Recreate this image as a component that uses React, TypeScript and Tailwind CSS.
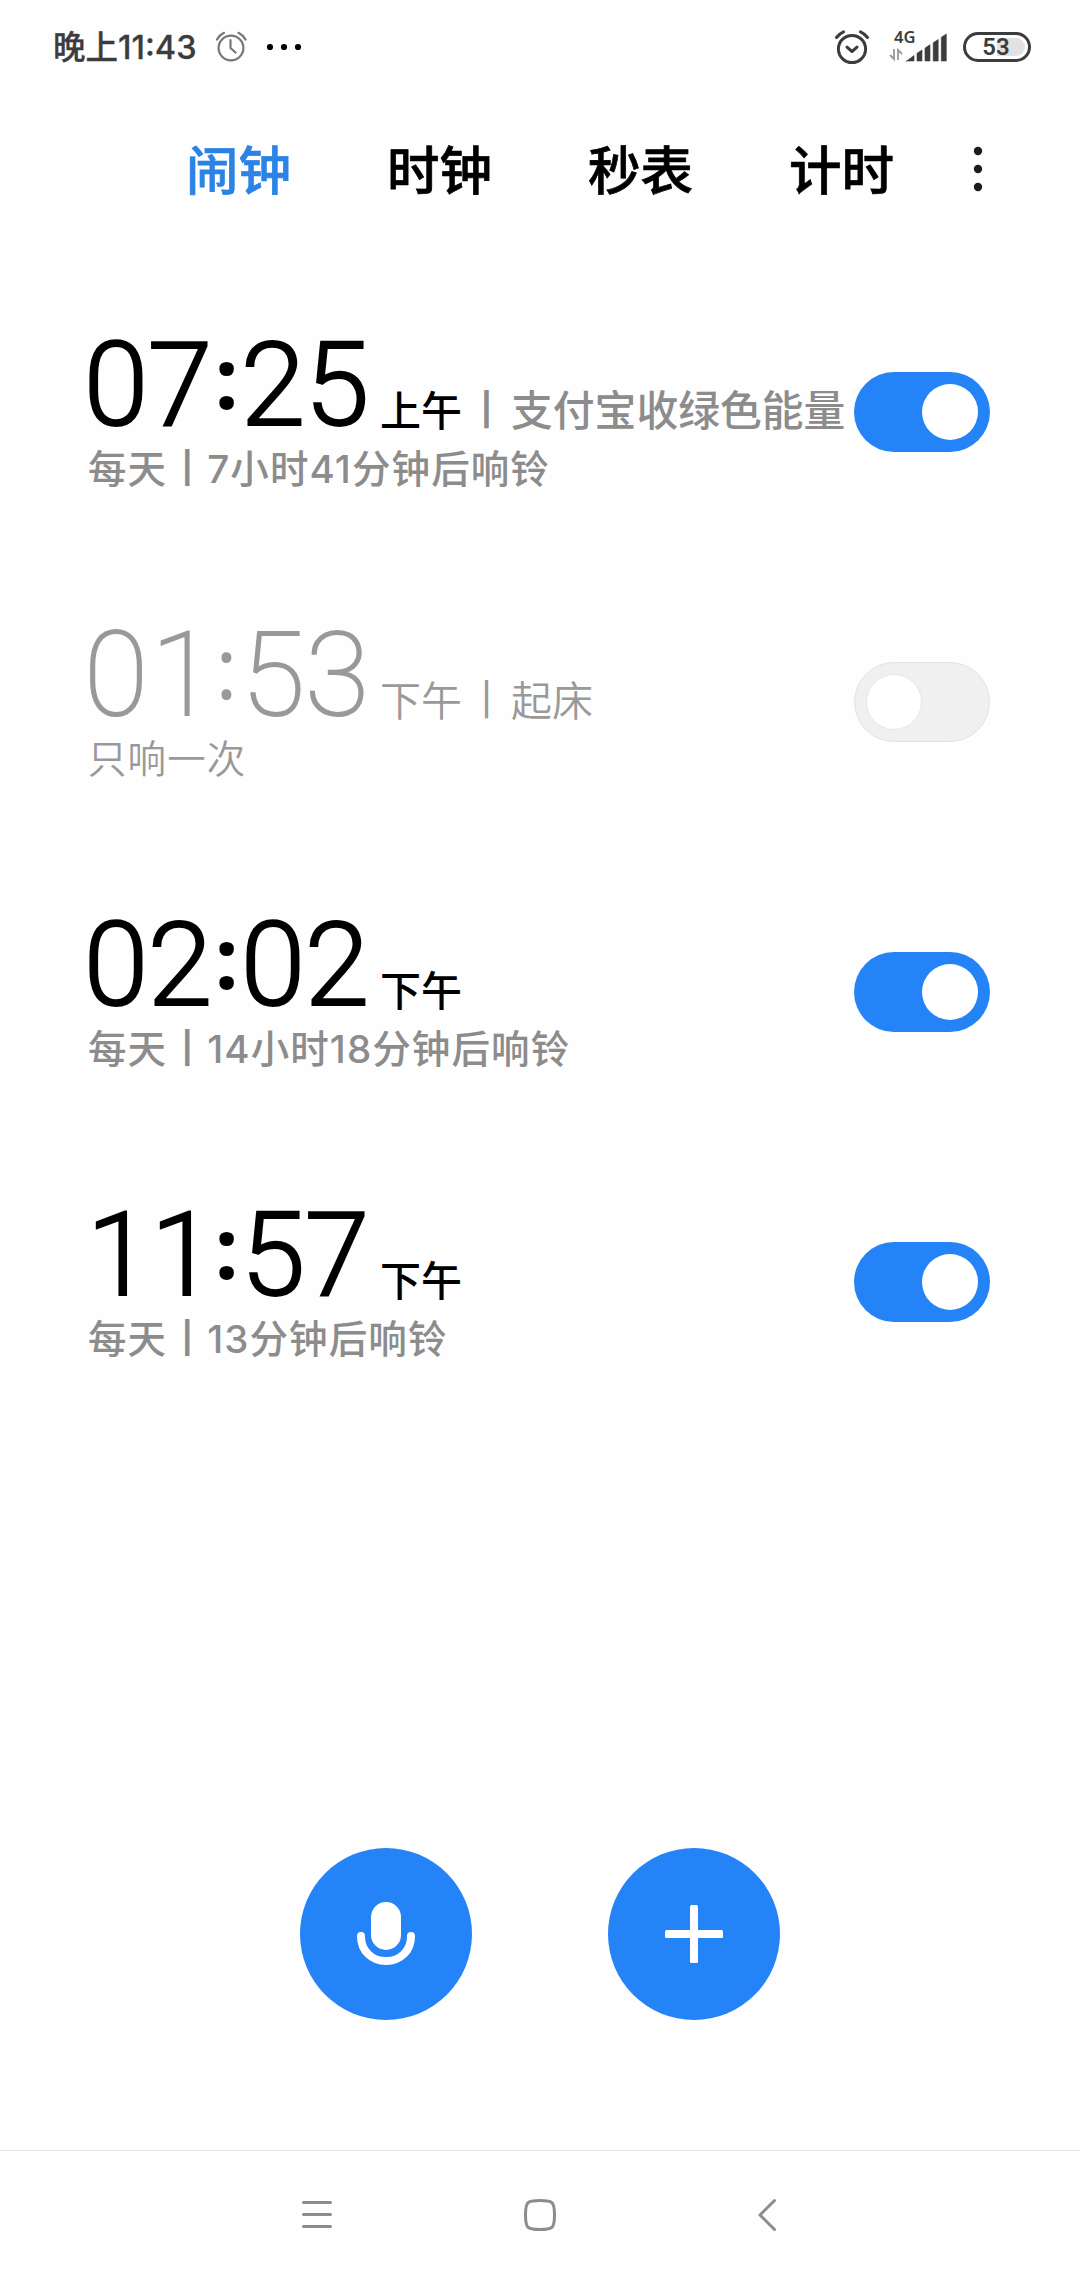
import React from 'react';

type Alarm = {
  time: string;
  period: string;
  label?: string;
  note: string[];
  on: boolean;
};

const alarms: Alarm[] = [
  { time: '07:25', period: '上午', label: '支付宝收绿色能量', note: ['每天', '7小时41分钟后响铃'], on: true },
  { time: '01:53', period: '下午', label: '起床', note: ['只响一次'], on: false },
  { time: '02:02', period: '下午', note: ['每天', '14小时18分钟后响铃'], on: true },
  { time: '11:57', period: '下午', note: ['每天', '13分钟后响铃'], on: true },
];

const tabs = ['闹钟', '时钟', '秒表', '计时'];

function StatusBar() {
  return (
    <header className="flex h-[94px] items-center pl-[53px] pr-[49px] text-[#3c3c3c]">
      <span className="w-[163px] whitespace-nowrap pt-[2px] text-[32.500px] font-medium leading-[92px] [-webkit-text-stroke:0.3px]">晚上11:43</span>
      <svg className="h-8 w-8" viewBox="0 0 32 32" fill="none" stroke="#777" strokeWidth="2.200" strokeLinecap="round">
        <circle cx="15" cy="17" r="12.400" />
        <path d="M14.500 9v8l5 4.500M1 8.500Q3.500 4 8 1.800M29.500 8.500Q27 4 22.500 1.800" />
      </svg>
      <svg className="ml-[18px] h-2 w-9" viewBox="0 0 36 8" fill="#000">
        <circle cx="4" cy="4" r="3.100" />
        <circle cx="18" cy="4" r="3.100" />
        <circle cx="32" cy="4" r="3.100" />
      </svg>
      <div className="ml-auto flex items-center">
        <svg className="h-9 w-9" viewBox="0 0 36 36" fill="none" stroke="#3c3c3c" strokeWidth="3" strokeLinecap="round" strokeLinejoin="round">
          <circle cx="18" cy="20" r="13.600" />
          <path d="M13 18.200l5 4.300 5-4.300M2.500 8.500Q5.500 4.500 9.500 2.800M33.500 8.500Q30.500 4.500 26.500 2.800" />
        </svg>
        <svg className="ml-[19px] mr-4 h-9 w-[58px] overflow-visible" viewBox="0 0 58 36" fill="#3c3c3c">
          <text x="5" y="13.500" fontFamily="Noto Sans" fontWeight="600" fontSize="16.500">4G</text>
          <path d="M5 20v10l-4-4M9 31V21l4 4" fill="none" stroke="#999" strokeWidth="1.800" />
          <path d="M17 32.500L25 26.500V32H18zM28 24.300l5-3.300V32h-5zM36 19l5-3.300V32h-5zM44.200 13.800l5-3.300V32h-5zM52.300 8.300l5-3.300V32h-5z" stroke="#3c3c3c" strokeWidth=".6" strokeLinejoin="round" />
        </svg>
        <div className="flex h-[30px] w-[68px] items-center rounded-full border-[3px] border-[#3c3c3c] p-[3px]">
          <div className="flex h-full w-full items-center justify-center rounded-full bg-gradient-to-r from-white from-50% to-[#e2e2e2] to-50% pr-[2px] font-['Roboto'] text-[24px] font-semibold leading-none">53</div>
        </div>
      </div>
    </header>
  );
}

function TabBar() {
  return (
    <nav className="flex h-[150px] items-start pl-[138px] pt-[39px]">
      {tabs.map((t, i) => (
        <button
          key={t}
          className={
            i === 0
              ? 'w-[201px] text-center text-[52.500px] font-medium leading-[76px] text-[#2b83e6] [-webkit-text-stroke:0.7px]'
              : 'w-[201px] text-center text-[52.500px] font-medium leading-[76px] text-black [-webkit-text-stroke:0.7px]'
          }
        >
          {t}
        </button>
      ))}
      <svg className="ml-[28px] mt-[10px] h-[52px] w-4" viewBox="0 0 16 52" fill="#1c1c1c">
        <circle cx="8" cy="8" r="4.200" />
        <circle cx="8" cy="26" r="4.200" />
        <circle cx="8" cy="44" r="4.200" />
      </svg>
    </nav>
  );
}

function Time({ value, on }: { value: string; on: boolean }) {
  return (
    <div
      className={
        on
          ? "-ml-[4px] flex h-[84px] w-[285px] items-center pt-[3px] font-['Roboto'] text-[117px] font-light leading-[84px] text-black"
          : "-ml-[4px] flex h-[84px] w-[285px] items-center pt-[3px] font-['Roboto'] text-[117px] font-thin leading-[84px]"
      }
    >
      {value.split('').map((c, i) =>
        c === ':' ? (
          <span
            key={i}
            className={
              on
                ? "-mt-[17px] flex w-[29px] justify-center font-['Open_Sans'] text-[85px] font-bold"
                : "-mt-[17px] flex w-[29px] justify-center font-['Open_Sans'] text-[85px] font-normal"
            }
          >
            :
          </span>
        ) : (
          <span
            key={i}
            className={`flex w-16 justify-center ${c === '1' ? 'pl-[6px]' : ''} ${on ? '[-webkit-text-stroke:1.8px]' : '[-webkit-text-stroke:2px]'}`}
          >
            {c}
          </span>
        ),
      )}
    </div>
  );
}

function Toggle({ on }: { on: boolean }) {
  return on ? (
    <span className="flex h-20 w-[136px] items-center justify-end rounded-full bg-[#2483f7] p-3">
      <span className="size-14 rounded-full bg-white" />
    </span>
  ) : (
    <span className="flex h-20 w-[136px] items-center rounded-full border border-[#e2e2e2] bg-[#f0f0f0] px-[11px]">
      <span className="size-14 rounded-full border border-[#e6e6e6] bg-white" />
    </span>
  );
}

function AlarmRow({ alarm }: { alarm: Alarm }) {
  const { on } = alarm;
  return (
    <li className={on ? 'flex h-[290px] justify-between font-medium' : 'flex h-[290px] justify-between font-[350]'}>
      <div className={on ? 'text-[#8c8c8c]' : 'text-[#999]'}>
        <div className="flex h-[84px] items-start whitespace-nowrap">
          <Time value={alarm.time} on={on} />
          <span className={on ? 'ml-[11px] mt-[46px] text-[41px] leading-[48px] text-black' : 'ml-[11px] mt-[46px] text-[41px] leading-[48px]'}>
            {alarm.period}
          </span>
          {alarm.label && (
            <>
              <span
                className={
                  on
                    ? 'mt-[45px] w-[49px] text-center text-[32px] font-bold leading-[48px]'
                    : 'mt-[45px] w-[49px] text-center text-[32px] font-medium leading-[48px]'
                }
              >
                |
              </span>
              <span className={on ? 'mt-[46px] text-[41.800px] leading-[48px]' : 'mt-[46px] text-[41px] leading-[48px]'}>{alarm.label}</span>
            </>
          )}
        </div>
        <div className="mt-[20px] flex whitespace-nowrap text-[38.500px] leading-[48px] tracking-[1.1px]">
          <span>{alarm.note[0]}</span>
          {alarm.note[1] && (
            <>
              <span className="-mt-px w-10 text-center text-[31px] font-bold tracking-normal">|</span>
              <span>{alarm.note[1]}</span>
            </>
          )}
        </div>
      </div>
      <div className="mt-[31px]">
        <Toggle on={on} />
      </div>
    </li>
  );
}

export default function App() {
  return (
    <div className="flex h-[2280px] w-[1080px] flex-col overflow-hidden bg-[#fefefe] font-['Inter','Noto_Sans_CJK_SC',sans-serif]">
      <StatusBar />
      <TabBar />
      <ul className="mt-[97px] h-[1160px] pl-[88px] pr-[90px]">
        {alarms.map((a) => (
          <AlarmRow key={a.time} alarm={a} />
        ))}
      </ul>
      <div className="mt-[347px] flex justify-center gap-[136px]">
        <button className="flex size-[172px] items-center justify-center rounded-full bg-[#2483f7]">
          <svg className="size-[66px]" viewBox="0 0 66 66" fill="none">
            <rect x="18" y="1" width="30" height="48" rx="15" fill="#fff" />
            <path d="M8 35v.500C8 49.500 18.500 60 33 60s25-10.500 25-24.500V35" stroke="#fff" strokeWidth="8" strokeLinecap="round" />
          </svg>
        </button>
        <button className="flex size-[172px] items-center justify-center rounded-full bg-[#2483f7]">
          <svg className="size-[58px]" viewBox="0 0 58 58" fill="#fff">
            <rect x="25" width="8" height="58" rx="1.500" />
            <rect y="25" width="58" height="8" rx="1.500" />
          </svg>
        </button>
      </div>
      <footer className="mt-auto flex h-[130px] items-start border-t border-[#e4e4e4] pl-[299px] pt-[46px]">
        <svg className="h-9 w-9" viewBox="0 0 36 36" stroke="#8c8c8c" strokeWidth="3" strokeLinecap="round">
          <path d="M4.500 5.500h27M4.500 17.500h27M4.500 29.500h27" />
        </svg>
        <svg className="ml-[187px] h-9 w-9" viewBox="0 0 36 36" fill="none" stroke="#8c8c8c" strokeWidth="3">
          <path d="M18 3.500C31 3.500 32.500 5 32.500 18S31 32.500 18 32.500 3.500 31 3.500 18 5 3.500 18 3.500z" />
        </svg>
        <svg className="ml-[190px] h-9 w-9" viewBox="0 0 36 36" fill="none" stroke="#8c8c8c" strokeWidth="3" strokeLinecap="round" strokeLinejoin="round">
          <path d="M26.500 3.500L12 18l14.500 14.500" />
        </svg>
      </footer>
    </div>
  );
}
